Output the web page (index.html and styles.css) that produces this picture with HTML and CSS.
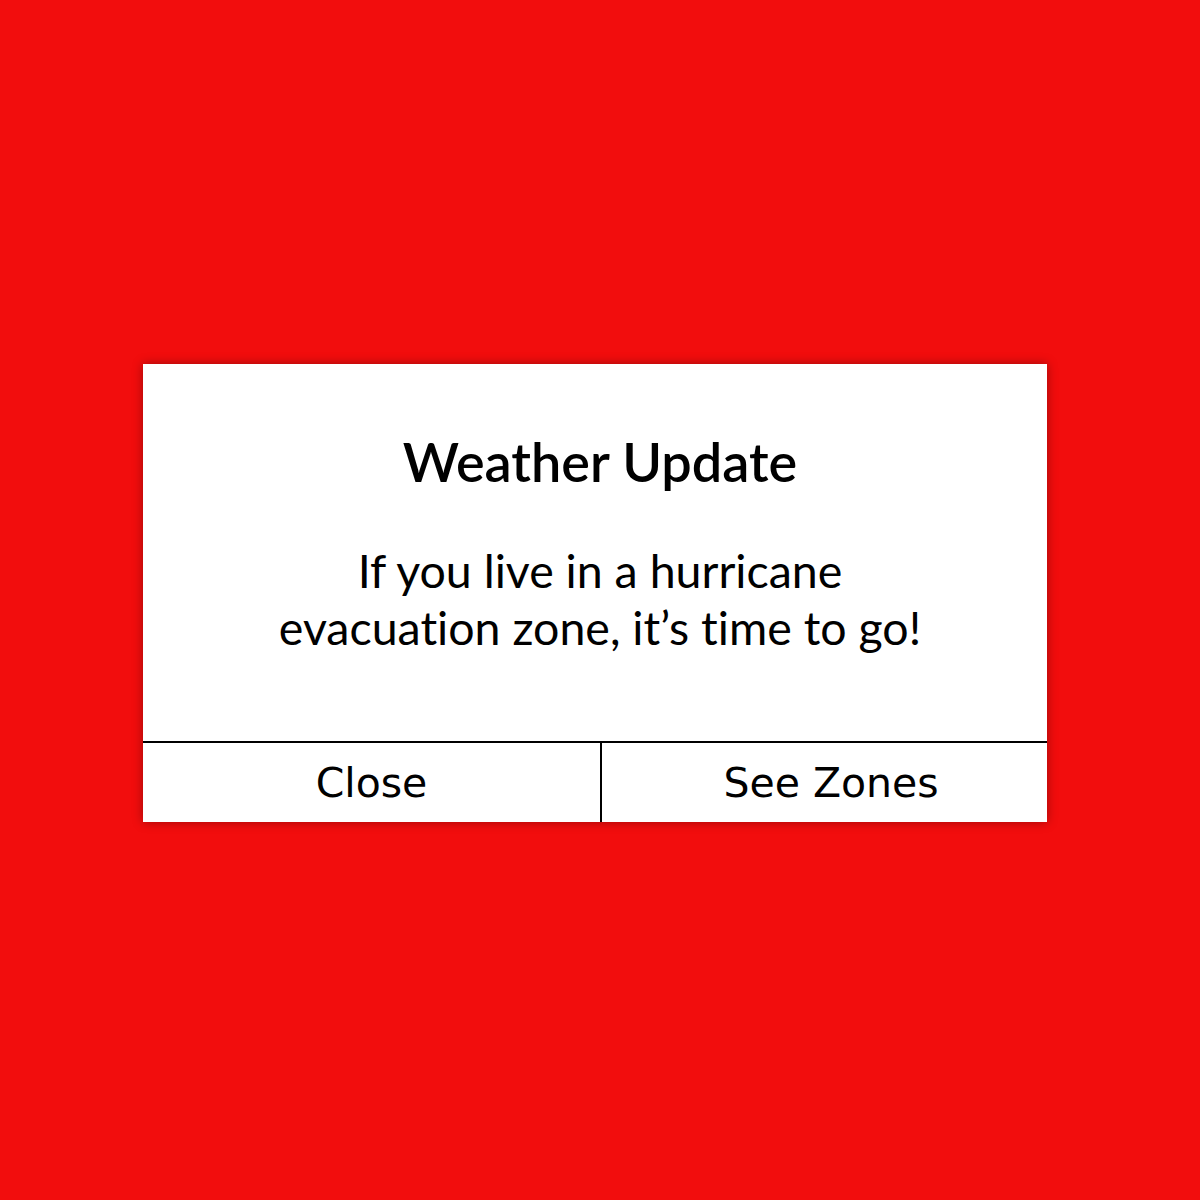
FILE: index.html
```html
<!DOCTYPE html>
<html>
<head>
<meta charset="utf-8">
<link rel="stylesheet" href="styles.css">
</head>
<body>
<div class="stage">
  <div class="dialog">
    <div class="content">
      <h1 class="title">Weather Update</h1>
      <p class="message">If you live in a hurricane<br>evacuation zone, it’s time to go!</p>
    </div>
    <div class="actions">
      <div class="btn btn-left">Close</div>
      <div class="btn btn-right">See Zones</div>
    </div>
  </div>
</div>
</body>
</html>
```

FILE: styles.css
```css
html, body {
  margin: 0;
  padding: 0;
  background: #f20d0d;
}
.stage {
  width: 1200px;
  height: 1200px;
  display: flex;
  align-items: flex-start;
  justify-content: flex-start;
  padding: 364px 0 0 143px;
  box-sizing: border-box;
}
.dialog {
  width: 904px;
  height: 458px;
  background: #ffffff;
  box-shadow: 0 0 10px rgba(0, 0, 0, 0.35);
  display: flex;
  flex-direction: column;
}
.content {
  height: 377px;
  box-sizing: border-box;
  padding: 68px 0 0 10px;
  display: flex;
  flex-direction: column;
  align-items: center;
  color: #000;
  font-variant-ligatures: none;
}
.title {
  margin: 0;
  font-family: "Lato", "Liberation Sans", sans-serif;
  font-weight: 600;
  font-size: 54px;
  line-height: 60px;
}
.message {
  margin: 50px 0 0 0;
  font-family: "Lato", "Liberation Sans", sans-serif;
  font-weight: 400;
  font-size: 46.5px;
  line-height: 57px;
  text-align: center;
}
.actions {
  flex: 1;
  display: flex;
  border-top: 2px solid #000;
}
.btn {
  display: flex;
  align-items: center;
  justify-content: center;
  font-family: "DejaVu Sans", sans-serif;
  font-size: 41px;
  color: #000;
}
.btn-left {
  width: 457px;
  border-right: 2px solid #000;
}
.btn-right {
  flex: 1;
  padding-left: 13px;
}
```
